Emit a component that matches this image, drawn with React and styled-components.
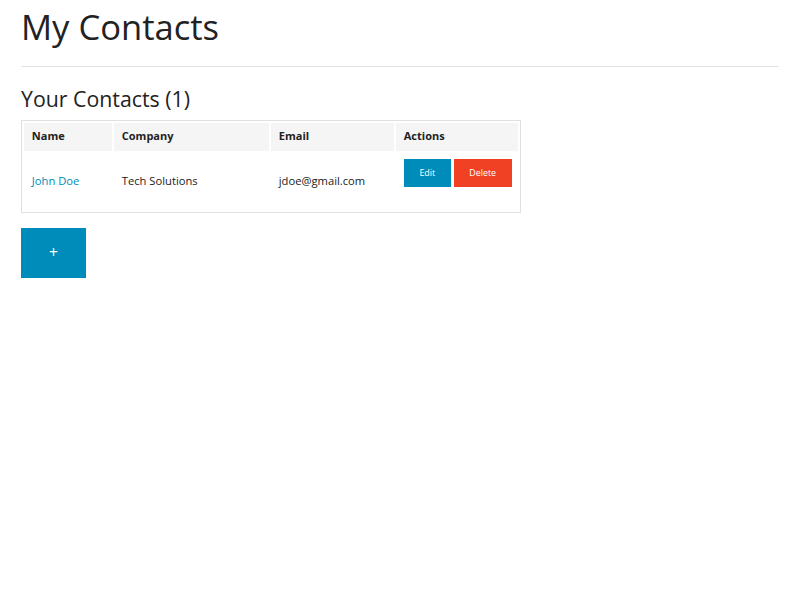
import React from "react";
import styled, { createGlobalStyle } from "styled-components";

const GlobalStyle = createGlobalStyle`
  html, body {
    margin: 0;
    padding: 0;
    background: #ffffff;
  }
  body {
    font-family: "Open Sans", "Liberation Sans", sans-serif;
    color: #222222;
  }
`;

const contacts = [
  { id: 1, name: "John Doe", company: "Tech Solutions", email: "jdoe@gmail.com" },
];

const Page = styled.div`
  padding: 0 21px;
`;

const Title = styled.h1`
  margin: 3px 0 0;
  font-size: 34.6px;
  font-weight: 400;
  line-height: 48px;
  color: #222222;
`;

const Divider = styled.hr`
  margin: 15px 0 0;
  height: 0;
  border: none;
  border-top: 1px solid #e3e3e3;
`;

const SubTitle = styled.h3`
  margin: 17px 0 0;
  font-size: 21.3px;
  font-weight: 400;
  line-height: 30px;
  color: #222222;
`;

const Table = styled.table`
  margin-top: 6px;
  width: 500px;
  table-layout: fixed;
  border: 1px solid #e0e0e0;
  border-spacing: 2px;
  background: #ffffff;
`;

const Th = styled.th`
  width: ${(props) => props.w}px;
  padding: 6px 7.8px 8px;
  background: #f5f5f5;
  font-size: 11px;
  font-weight: 700;
  line-height: 14px;
  text-align: left;
  color: #222222;
`;

const Td = styled.td`
  padding: 6px 7.8px 7px;
  font-size: 11.2px;
  line-height: 14px;
  color: #222222;
  vertical-align: middle;
  white-space: nowrap;
`;

const NameLink = styled.a`
  color: #008cba;
  text-decoration: none;
  cursor: pointer;
`;

const Button = styled.button`
  display: inline-block;
  margin: 0 0 15.6px;
  padding: 0 ${(props) => (props.large ? 28 : 15.6)}px;
  height: ${(props) => (props.large ? 50 : 28)}px;
  border: none;
  background: ${(props) => (props.danger ? "#f04124" : "#008cba")};
  color: #ffffff;
  font-family: "Open Sans", "Liberation Sans", sans-serif;
  font-size: ${(props) => (props.large ? 15.6 : 8.9)}px;
  line-height: 1;
  cursor: pointer;
`;

const AddRow = styled.div`
  margin-top: 15px;
`;

export default function App() {
  return (
    <>
      <GlobalStyle />
      <Page>
        <Title>My Contacts</Title>
        <Divider />
        <SubTitle>Your Contacts ({contacts.length})</SubTitle>
        <Table>
          <thead>
            <tr>
              <Th w={72.4}>Name</Th>
              <Th w={139.4}>Company</Th>
              <Th w={107.4}>Email</Th>
              <Th w={106.4}>Actions</Th>
            </tr>
          </thead>
          <tbody>
            {contacts.map((c) => (
              <tr key={c.id}>
                <Td>
                  <NameLink>{c.name}</NameLink>
                </Td>
                <Td>{c.company}</Td>
                <Td>{c.email}</Td>
                <Td>
                  <Button>Edit</Button> <Button danger>Delete</Button>
                </Td>
              </tr>
            ))}
          </tbody>
        </Table>
        <AddRow>
          <Button large>+</Button>
        </AddRow>
      </Page>
    </>
  );
}
